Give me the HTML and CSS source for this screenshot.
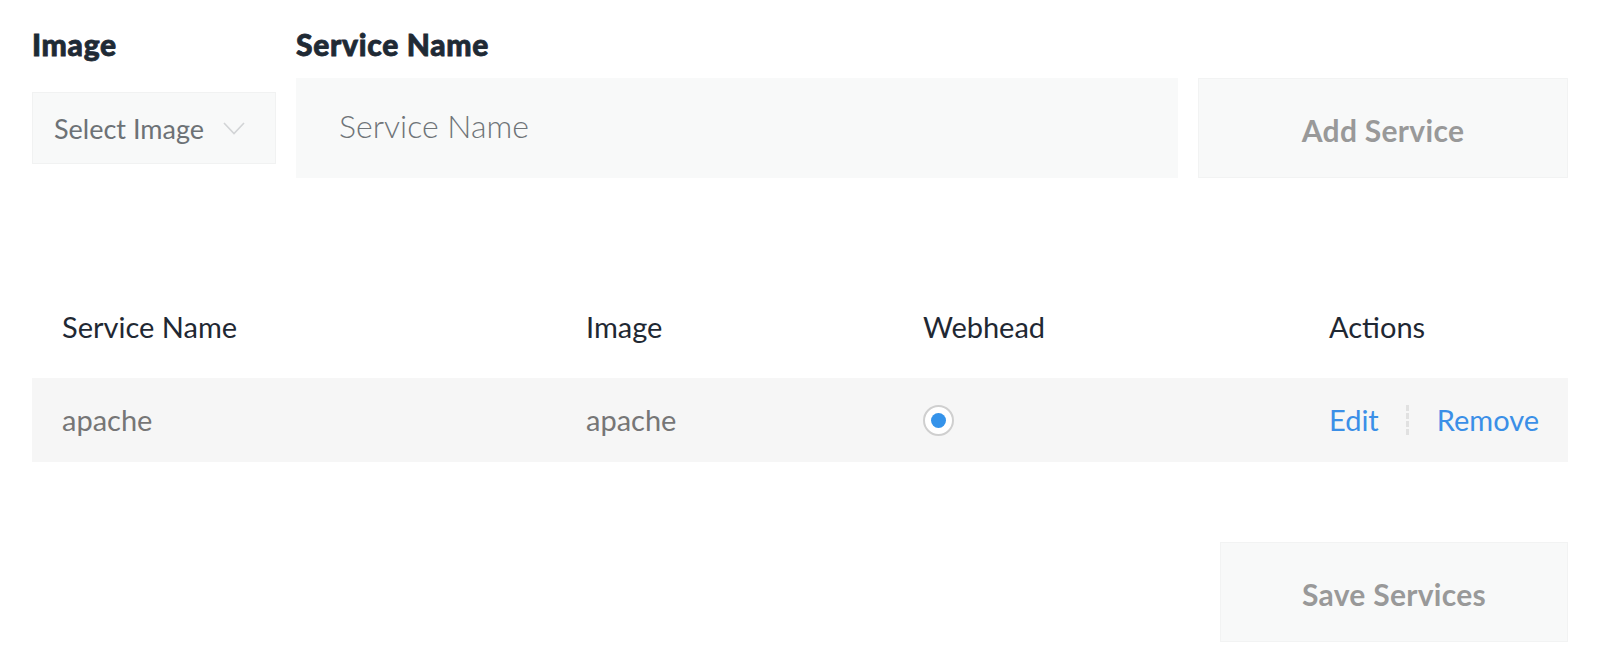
FILE: index.html
```html
<!DOCTYPE html>
<html>
<head>
<meta charset="utf-8">
<link rel="stylesheet" href="styles.css">
</head>
<body>
<div class="page">
  <div class="form">
    <div class="label">Image</div>
    <div class="label">Service Name</div>
    <div></div>
    <div class="select">
      <span class="select-text">Select Image</span>
      <svg class="chevron" width="22" height="13" viewBox="0 0 22 13"><path d="M1 1 L11 11.5 L21 1" fill="none" stroke="#d2d4d6" stroke-width="1.6"/></svg>
    </div>
    <div class="input"><span class="placeholder">Service Name</span></div>
    <div class="btn btn-add">Add Service</div>
  </div>

  <table class="services">
    <thead>
      <tr>
        <th class="c1">Service Name</th>
        <th class="c2">Image</th>
        <th class="c3">Webhead</th>
        <th class="c4">Actions</th>
      </tr>
    </thead>
    <tbody>
      <tr class="row">
        <td>apache</td>
        <td>apache</td>
        <td><span class="radio"><span class="dot"></span></span></td>
        <td>
          <div class="actions">
            <span class="link">Edit</span>
            <span class="sep"></span>
            <span class="link">Remove</span>
          </div>
        </td>
      </tr>
    </tbody>
  </table>

  <div class="footer">
    <div class="btn btn-save">Save Services</div>
  </div>
</div>
</body>
</html>
```

FILE: styles.css
```css
html, body {
  margin: 0;
  padding: 0;
  background: #ffffff;
}

body {
  font-family: Lato, "Open Sans", sans-serif;
}

.page {
  padding: 26px 32px 0 32px;
}

.form {
  display: grid;
  grid-template-columns: 244px 882px 370px;
  column-gap: 20px;
  row-gap: 16px;
  align-items: center;
}

.label {
  font-size: 30px;
  line-height: 36px;
  font-weight: 900;
  color: #1f2a35;
  -webkit-text-stroke: 0.8px #1f2a35;
  letter-spacing: 0.7px;
}

.select {
  height: 72px;
  box-sizing: border-box;
  background: #f8f9f9;
  border: 1px solid #f1f2f2;
  display: flex;
  align-items: center;
  justify-content: space-between;
  padding: 0 30px 0 21px;
}

.select-text {
  font-size: 27px;
  color: #6d7276;
  line-height: 36px;
  padding-top: 2px;
}

.chevron {
  display: block;
}

.input {
  height: 100px;
  box-sizing: border-box;
  background: #f8f9f9;
  display: flex;
  align-items: center;
  padding-left: 43px;
}

.placeholder {
  font-size: 32px;
  font-weight: 300;
  color: #6f7478;
  line-height: 40px;
  padding-bottom: 5px;
}

.btn {
  height: 100px;
  box-sizing: border-box;
  background: #f8f9f9;
  border: 1px solid #f2f3f3;
  display: flex;
  align-items: center;
  justify-content: center;
  padding-top: 4px;
  font-size: 30px;
  font-weight: 700;
  color: #999999;
  letter-spacing: 0.3px;
}

.services {
  width: 1536px;
  border-collapse: collapse;
  margin-top: 131px;
}

.services th {
  font-weight: 400;
  font-size: 29px;
  line-height: 36px;
  color: #1f2833;
  text-align: left;
  padding: 0 0 33px 30px;
}

.c1 { width: 494px; }
.c2 { width: 307px; }
.c3 { width: 376px; }

.row {
  background: #f6f6f6;
}

.row td {
  height: 84px;
  padding: 0 0 0 30px;
  font-size: 29px;
  line-height: 36px;
  color: #767676;
  vertical-align: middle;
}

.radio {
  display: flex;
  align-items: center;
  justify-content: center;
  width: 31px;
  height: 31px;
  box-sizing: border-box;
  border: 2px solid #cfcfcf;
  border-radius: 50%;
  background: #ffffff;
}

.dot {
  width: 15px;
  height: 15px;
  border-radius: 50%;
  background: #3593ea;
}

.actions {
  display: flex;
  align-items: center;
}

.link {
  color: #3b8fe7;
}

.sep {
  width: 0;
  height: 30px;
  border-left: 3px dashed #e1e1e1;
  margin: 0 28px 0 27px;
}

.footer {
  display: flex;
  justify-content: flex-end;
  margin-top: 80px;
}

.btn-save {
  width: 348px;
}
```
